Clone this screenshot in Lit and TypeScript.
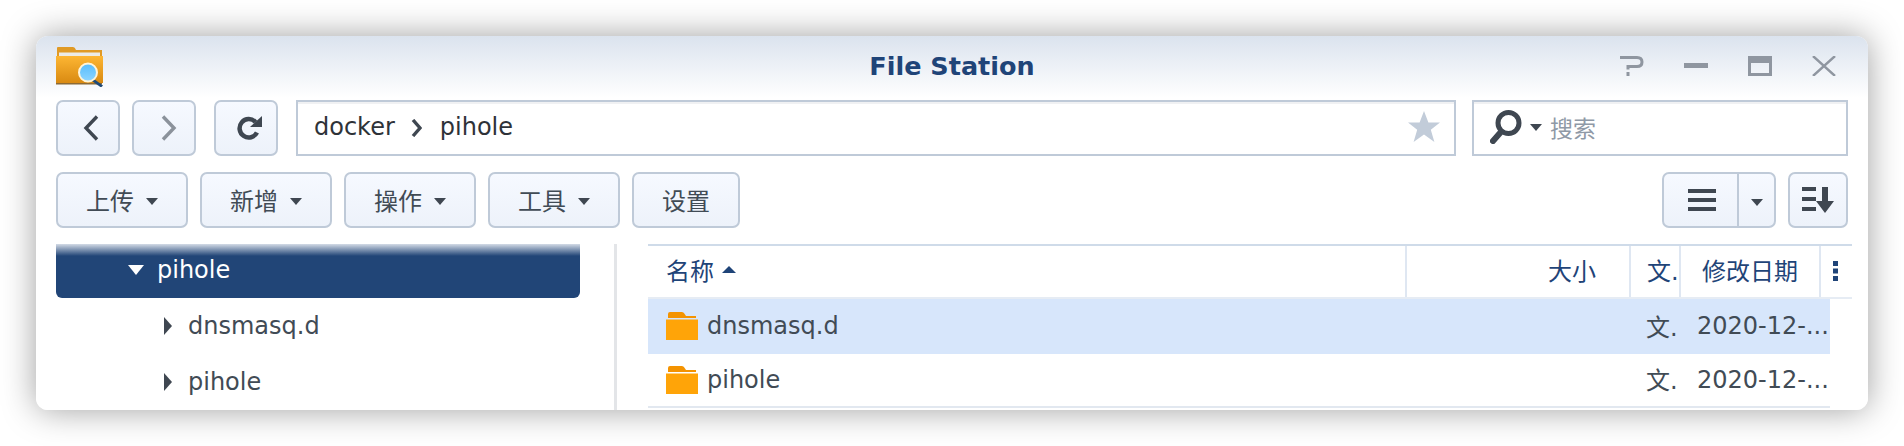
import { LitElement, html, css, svg } from "lit";
import { customElement } from "lit/decorators.js";

const caret = html`<svg class="caret" width="12" height="7" viewBox="0 0 12 7"><path d="M0 0h12L6 7z" fill="#3f4751"/></svg>`;

const smallFolder = svg`<svg class="small-folder" width="32" height="28" viewBox="0 0 32 28">
  <path d="M2 2q0-2 2-2h12q2 0 3 2.500l1 1.500h10v2H2z" fill="#f49300"/>
  <rect x="0" y="7.500" width="32" height="20.500" fill="#ffa408"/>
</svg>`;

@customElement("app-root")
export class AppRoot extends LitElement {
  tools = ["上传", "新增", "操作", "工具"];
  tree = ["dnsmasq.d", "pihole"];

  static styles = css`
    :host {
      display: block;
      height: 446px;
      padding: 36px;
      box-sizing: border-box;
      background: #fff;
      font-family: "DejaVu Sans", "Noto Sans CJK SC", sans-serif;
      font-size: 24px;
      color: #414b55;
      overflow: hidden;
    }
    .window {
      width: 1832px;
      height: 374px;
      border-radius: 12px;
      overflow: hidden;
      background: linear-gradient(#dbe3ee 0, #fff 62px);
      box-shadow: 0 0 34px rgba(0, 0, 0, 0.38);
    }
    .titlebar {
      height: 64px;
      padding: 0 20px;
      display: grid;
      grid-template-columns: 1fr auto 1fr;
      align-items: center;
    }
    .app-icon {
      display: block;
      margin-bottom: 3px;
    }
    .title {
      font-size: 25.5px;
      font-weight: 700;
      color: #1f4478;
      line-height: 1;
      margin-top: -2px;
    }
    .controls {
      justify-self: end;
      display: flex;
      gap: 40px;
      margin: -4px 12px 0 0;
    }
    .controls svg {
      display: block;
    }
    .nav,
    .actions {
      display: flex;
      padding: 0 20px;
      height: 56px;
      align-items: stretch;
    }
    .actions {
      margin-top: 16px;
      gap: 12px;
    }
    .btn {
      box-sizing: border-box;
      border: 2px solid #bfcad8;
      border-radius: 7px;
      background: linear-gradient(#f6f9ff, #edf2fa);
      display: flex;
      align-items: center;
      justify-content: center;
    }
    .nav .btn {
      width: 64px;
    }
    .nav .btn + .btn {
      margin-left: 12px;
    }
    .nav .btn.refresh {
      margin-left: 18px;
    }
    .nav .back svg {
      margin-left: 6px;
    }
    .nav .forward svg {
      margin-left: 10px;
    }
    .nav .refresh svg {
      margin-left: 6px;
    }
    .tool {
      width: 132px;
      gap: 12px;
      padding-bottom: 2px;
    }
    .tool .caret {
      margin-top: 5px;
    }
    .tool.plain {
      width: 108px;
    }
    .field {
      box-sizing: border-box;
      border: 2px solid #bfcad8;
      background: #fff;
      box-shadow: inset 0 2px 0 #f0f1f3;
      display: flex;
      align-items: center;
      padding-bottom: 2px;
    }
    .address {
      width: 1160px;
      margin-left: 18px;
      padding: 0 14px 3px 16px;
      color: #2e3238;
    }
    .address .crumb-sep {
      margin: 2px 18px 0 16px;
      display: block;
    }
    .address .star {
      margin-left: auto;
    }
    .search {
      width: 376px;
      margin-left: 16px;
      padding-left: 16px;
    }
    .search .caret {
      margin: 0 8px 0 8px;
    }
    .search span {
      color: #8f99a6;
      font-size: 23px;
    }
    .spacer {
      flex: 1;
    }
    .split {
      width: 114px;
      justify-content: flex-start;
    }
    .split .main {
      box-sizing: border-box;
      width: 75px;
      height: 100%;
      border-right: 2px solid #bfcad8;
      display: flex;
      align-items: center;
      justify-content: center;
      padding-left: 2px;
    }
    .split .more {
      flex: 1;
      display: flex;
      justify-content: center;
      padding-top: 5px;
    }
    .sort {
      width: 60px;
    }
    .body {
      display: flex;
      margin-top: 16px;
      height: 166px;
    }
    .side {
      width: 558px;
      padding-left: 20px;
      box-sizing: content-box;
      border-right: 3px solid #e3e5e8;
    }
    .node {
      height: 56px;
      width: 524px;
      display: flex;
      align-items: center;
      box-sizing: border-box;
      padding-bottom: 1px;
    }
    .node.open {
      height: 54px;
      padding: 0 0 2px 72px;
      gap: 13px;
      color: #fff;
      border-radius: 0 0 6px 6px;
      background: linear-gradient(#d3dbe6 0, #214577 12px);
    }
    .node.child {
      padding-left: 108px;
      gap: 16px;
    }
    .grid {
      margin-left: 31px;
      width: 1204px;
    }
    .head {
      height: 51px;
      box-sizing: content-box;
      display: grid;
      grid-template-columns: 757px 224px 50px 140px 33px;
      border-top: 2px solid #cfdbe9;
      border-bottom: 2px solid #e6ecf4;
      color: #1f4478;
    }
    .head > div {
      display: flex;
      align-items: center;
      box-sizing: border-box;
      white-space: nowrap;
      overflow: hidden;
      padding-bottom: 4px;
    }
    .head > div + div {
      border-left: 2px solid #dfe7f2;
    }
    .head .name {
      padding-left: 18px;
      gap: 8px;
    }
    .head .size {
      justify-content: flex-end;
      padding-right: 33px;
    }
    .head .type {
      padding-left: 16px;
    }
    .head .date {
      padding-left: 21px;
    }
    .head .menu {
      justify-content: center;
      padding: 0 2px 2px 0;
    }
    .row {
      width: 1182px;
      height: 52px;
      display: grid;
      grid-template-columns: 981px 50px 151px;
      align-items: center;
      white-space: nowrap;
      padding-bottom: 1px;
      box-sizing: border-box;
    }
    .row.selected {
      height: 55px;
      background: #d7e6fb;
    }
    .row .file {
      padding-left: 18px;
      display: flex;
      align-items: center;
      gap: 9px;
    }
    .row .type {
      padding-left: 17px;
      overflow: hidden;
      margin-bottom: 2px;
    }
    .row .date {
      padding-left: 18px;
    }
    .rows {
      border-bottom: 2px solid #e2e8f0;
      width: 1182px;
    }
    .small-folder {
      display: block;
    }
  `;

  render() {
    return html`
      <div class="window">
        <div class="titlebar">
          <svg class="app-icon" width="48" height="40" viewBox="0 0 48 40">
            <defs>
              <linearGradient id="fold" x1="0" y1="0" x2="0" y2="1">
                <stop offset="0" stop-color="#fdb633" />
                <stop offset="1" stop-color="#d98a12" />
              </linearGradient>
              <linearGradient id="lens" x1="0" y1="0" x2="0" y2="1">
                <stop offset="0" stop-color="#56bcfc" />
                <stop offset="1" stop-color="#8fd6ff" />
              </linearGradient>
            </defs>
            <path d="M1 1q0-1 1-1h15q2 0 3 3h26v7H1z" fill="#e09a25" />
            <rect x="3" y="5.500" width="41" height="3.500" fill="#ecebe6" />
            <path d="M0 9h47v27H0z" fill="url(#fold)" />
            <rect x="0" y="36" width="46" height="1.500" fill="#8c6a35" />
            <path d="M38 32l9 6.500-2 2-9-6.500z" fill="#1e4a78" />
            <circle cx="32" cy="25.500" r="9" fill="url(#lens)" stroke="#fff4d8" stroke-width="2" />
          </svg>
          <div class="title">File Station</div>
          <div class="controls">
            <svg width="24" height="20" viewBox="0 0 24 20" fill="none" stroke="#8f96a0" stroke-width="3">
              <path d="M0 1.500h17q5 0 5 4.500t-5 4.500h-9v3" />
              <path d="M8 16v4" />
            </svg>
            <svg width="24" height="20" viewBox="0 0 24 20"><rect y="7" width="24" height="5" fill="#8f96a0" /></svg>
            <svg width="24" height="20" viewBox="0 0 24 20" fill="none" stroke="#8f96a0">
              <rect x="1.500" y="1.500" width="21" height="17" stroke-width="3" />
              <rect y="2" width="24" height="5" fill="#8f96a0" stroke="none" />
            </svg>
            <svg width="24" height="20" viewBox="0 0 24 20" fill="none" stroke="#8f96a0" stroke-width="2.400">
              <path d="M1 0l22 20M23 0L1 20" />
            </svg>
          </div>
        </div>

        <div class="nav">
          <div class="btn back">
            <svg width="16" height="26" viewBox="0 0 16 26" fill="none" stroke="#3f4751" stroke-width="3.400">
              <path d="M14 1.500L3 13l11 11.500" />
            </svg>
          </div>
          <div class="btn forward">
            <svg width="16" height="26" viewBox="0 0 16 26" fill="none" stroke="#8b929b" stroke-width="3.400">
              <path d="M2 1.500L13 13 2 24.500" />
            </svg>
          </div>
          <div class="btn refresh">
            <svg width="26" height="26" viewBox="0 0 26 26">
              <path d="M21 17.500A9.200 9.200 0 1 1 19.500 7" fill="none" stroke="#3f4751" stroke-width="4.500" />
              <path d="M26 1v11H14z" fill="#3f4751" />
            </svg>
          </div>
          <div class="field address">
            docker
            <svg class="crumb-sep" width="11" height="18" viewBox="0 0 11 18" fill="none" stroke="#3f4751" stroke-width="3.400">
              <path d="M2 1l7 8-7 8" />
            </svg>
            pihole
            <svg class="star" width="32" height="32" viewBox="0 0 32 32">
              <path d="M16 0l4.400 11.500H32l-9.200 7.200L26.400 31 16 23.600 5.600 31l3.600-12.300L0 11.500h11.600z" fill="#c2ccd9" />
            </svg>
          </div>
          <div class="field search">
            <svg width="32" height="34" viewBox="0 0 32 34" fill="none" stroke="#3f4751">
              <circle cx="18.500" cy="13" r="10.500" stroke-width="5" />
              <path d="M10 23l-7 8" stroke-width="6" stroke-linecap="round" />
            </svg>
            ${caret}
            <span>搜索</span>
          </div>
        </div>

        <div class="actions">
          ${this.tools.map((t) => html`<div class="btn tool">${t}${caret}</div>`)}
          <div class="btn tool plain">设置</div>
          <div class="spacer"></div>
          <div class="btn split">
            <div class="main">
              <svg width="28" height="24" viewBox="0 0 28 24" fill="#3f4751">
                <rect y="1" width="28" height="4" /><rect y="10" width="28" height="4" /><rect y="19" width="28" height="4" />
              </svg>
            </div>
            <div class="more">${caret}</div>
          </div>
          <div class="btn sort">
            <svg width="32" height="26" viewBox="0 0 32 26" fill="#3f4751">
              <rect y="0" width="14" height="4" /><rect y="10" width="14" height="4" /><rect y="20" width="14" height="4" />
              <path d="M20 0h6v14h6l-9 12-9-12h6z" />
            </svg>
          </div>
        </div>

        <div class="body">
          <div class="side">
            <div class="node open">
              <svg width="16" height="10" viewBox="0 0 16 10"><path d="M0 0h16L8 10z" fill="#fff" /></svg>
              pihole
            </div>
            ${this.tree.map(
              (n) => html`<div class="node child">
                <svg width="8" height="18" viewBox="0 0 8 18"><path d="M0 0l8 9-8 9z" fill="#3f4751" /></svg>
                ${n}
              </div>`
            )}
          </div>
          <div class="grid">
            <div class="head">
              <div class="name">
                名称
                <svg width="14" height="7" viewBox="0 0 14 7"><path d="M7 0l7 7H0z" fill="#1f4478" /></svg>
              </div>
              <div class="size">大小</div>
              <div class="type">文.</div>
              <div class="date">修改日期</div>
              <div class="menu">
                <svg width="5" height="20" viewBox="0 0 5 20" fill="#1f4478">
                  <rect width="5" height="5" /><rect y="7.500" width="5" height="5" /><rect y="15" width="5" height="5" />
                </svg>
              </div>
            </div>
            <div class="rows">
              ${this.tree.map(
                (n, i) => html`<div class="row ${i === 0 ? "selected" : ""}">
                  <div class="file">${smallFolder}${n}</div>
                  <div class="type">文.</div>
                  <div class="date">2020-12-...</div>
                </div>`
              )}
            </div>
          </div>
        </div>
      </div>
    `;
  }
}
